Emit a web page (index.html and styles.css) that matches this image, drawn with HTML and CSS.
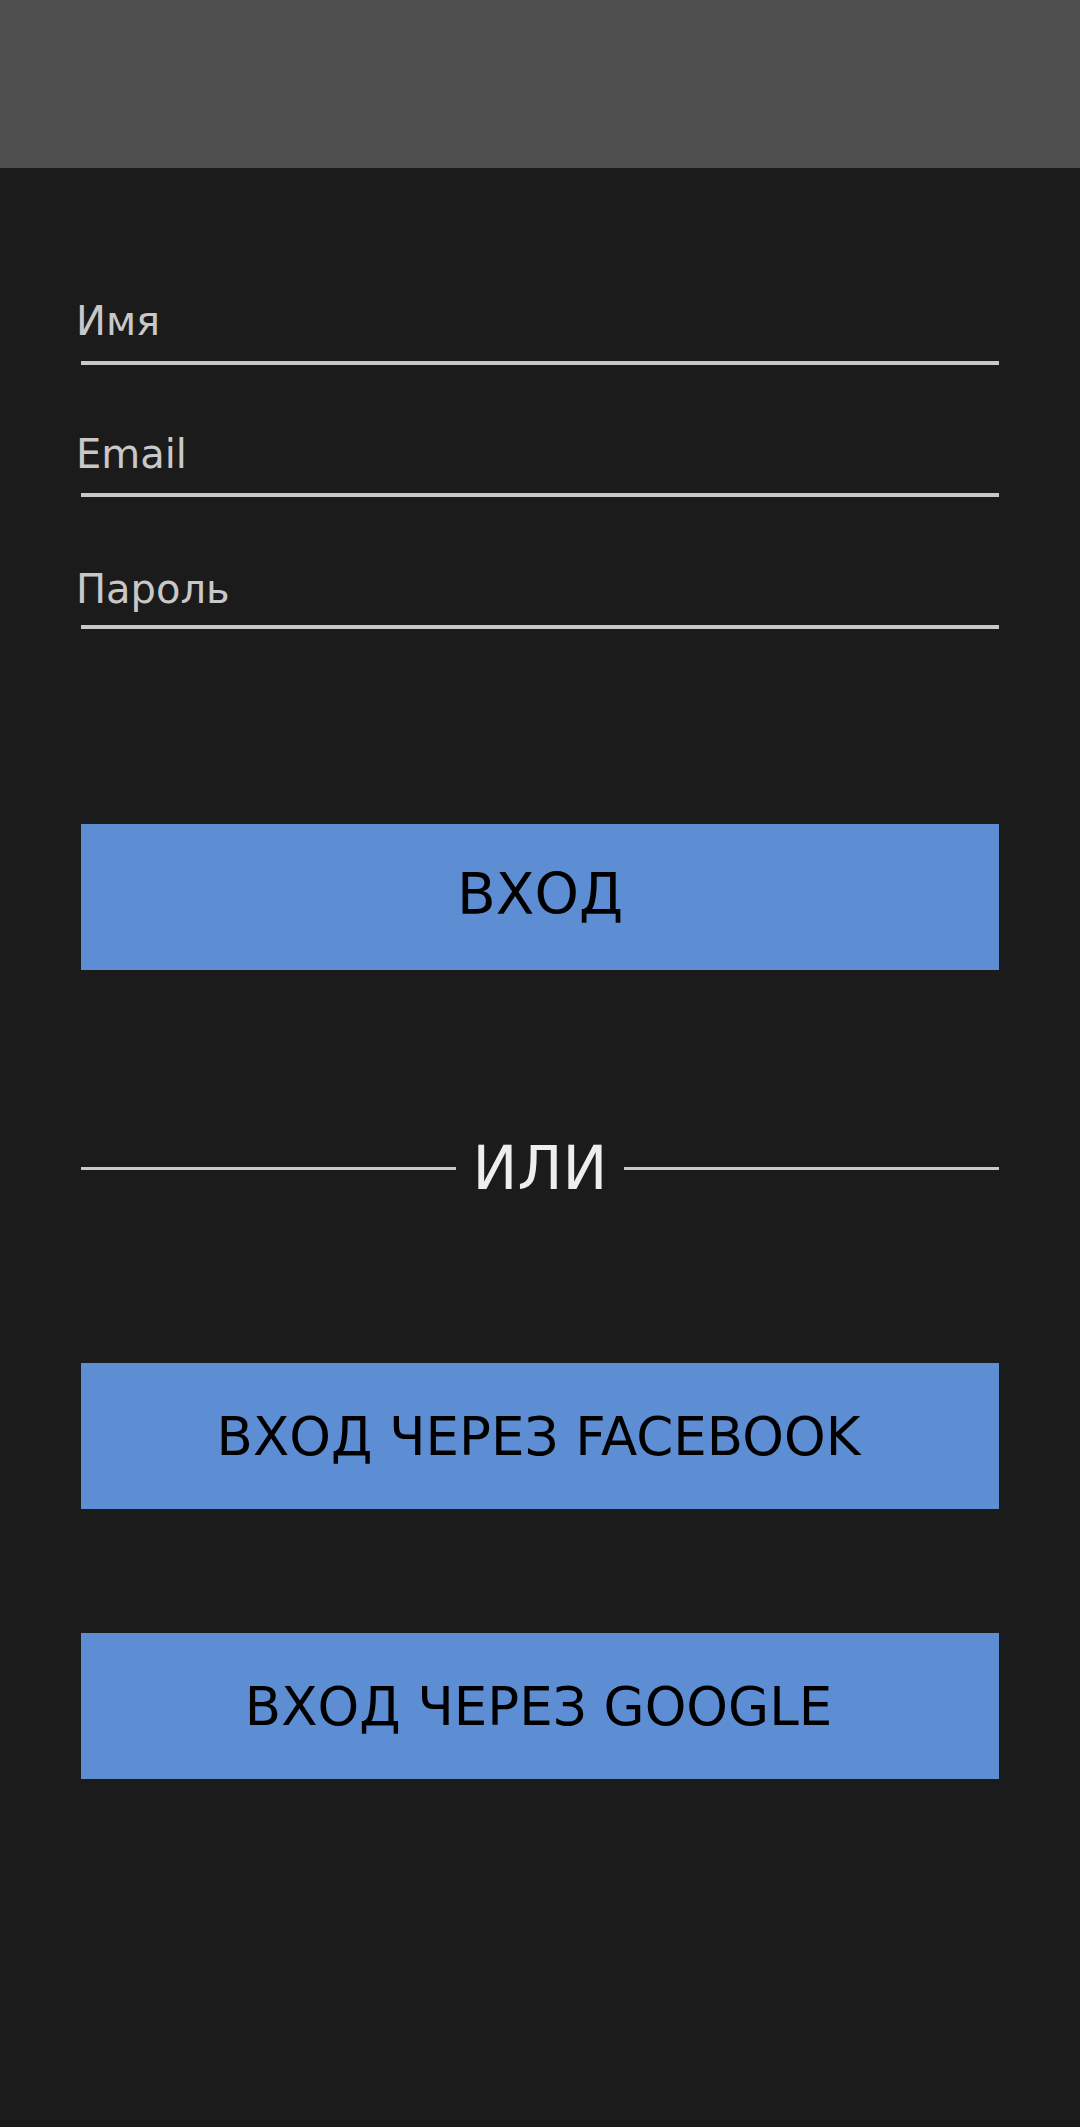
FILE: index.html
```html
<!DOCTYPE html>
<html lang="ru">
<head>
<meta charset="utf-8">
<title>Вход</title>
<link rel="stylesheet" href="styles.css">
</head>
<body>
<header class="topbar"></header>
<main class="content">
  <form class="login-form">
    <div class="field field-name">
      <div class="field-label">Имя</div>
      <div class="field-line"></div>
    </div>
    <div class="field field-email">
      <div class="field-label">Email</div>
      <div class="field-line"></div>
    </div>
    <div class="field field-password">
      <div class="field-label">Пароль</div>
      <div class="field-line"></div>
    </div>
    <div class="btn btn-main">ВХОД</div>
    <div class="divider">
      <span class="divider-line"></span>
      <span class="divider-text">ИЛИ</span>
      <span class="divider-line"></span>
    </div>
    <div class="btn btn-social btn-facebook">ВХОД ЧЕРЕЗ FACEBOOK</div>
    <div class="btn btn-social btn-google">ВХОД ЧЕРЕЗ GOOGLE</div>
  </form>
</main>
</body>
</html>
```
FILE: styles.css
```css
html, body {
  margin: 0;
  padding: 0;
}
body {
  background: #1b1b1b;
  min-height: 2127px;
  font-family: "DejaVu Sans", "Noto Sans", sans-serif;
}
.topbar {
  height: 168px;
  background: #4f4f4f;
}
.content {
  padding: 0 81px;
}
.login-form {
  display: flex;
  flex-direction: column;
  padding-top: 128px;
}
.field {
  display: flex;
  flex-direction: column;
}
.field-label {
  font-size: 40px;
  line-height: 50px;
  color: #c8c8c8;
  margin-left: -5px;
}
.field-line {
  height: 4px;
  margin-top: 15px;
  background: #c8c8c8;
}
.field-email {
  margin-top: 64px;
}
.field-email .field-line {
  margin-top: 14px;
}
.field-password {
  margin-top: 67px;
}
.field-password .field-line {
  margin-top: 11px;
}
.btn {
  height: 146px;
  background: #5d8dd3;
  color: #000;
  display: flex;
  align-items: center;
  justify-content: center;
  box-sizing: border-box;
}
.btn-main {
  margin-top: 195px;
  font-size: 56.5px;
  padding-bottom: 6px;
}
.divider {
  margin-top: 163px;
  height: 70px;
  display: flex;
  align-items: center;
  gap: 17px;
}
.divider-line {
  flex: 1;
  height: 3px;
  background: #c8c8c8;
}
.divider-text {
  font-size: 60px;
  color: #eeeeee;
}
.btn-social {
  font-size: 53px;
  padding-right: 3px;
}
.btn-facebook {
  margin-top: 160px;
}
.btn-google {
  margin-top: 124px;
}
```
